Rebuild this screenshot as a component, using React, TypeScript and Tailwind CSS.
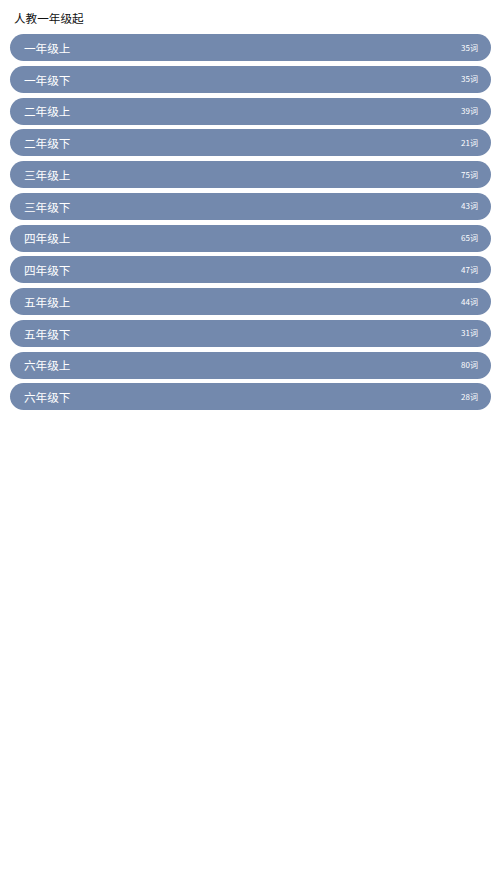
const grades = [
  { name: "一年级上", count: 35 },
  { name: "一年级下", count: 35 },
  { name: "二年级上", count: 39 },
  { name: "二年级下", count: 21 },
  { name: "三年级上", count: 75 },
  { name: "三年级下", count: 43 },
  { name: "四年级上", count: 65 },
  { name: "四年级下", count: 47 },
  { name: "五年级上", count: 44 },
  { name: "五年级下", count: 31 },
  { name: "六年级上", count: 80 },
  { name: "六年级下", count: 28 },
];

export default function App() {
  return (
    <div
      className="min-h-[890px] bg-white px-[10px] pt-[10px]"
      style={{ fontFamily: '"Noto Sans CJK SC", "Noto Sans", sans-serif' }}
    >
      <div className="pl-[4px] text-[11.6px] leading-[17px] text-[#111]">人教一年级起</div>
      <div className="mt-[7px] flex flex-col gap-[4.75px]">
        {grades.map((g) => (
          <div
            key={g.name}
            className="flex h-[27px] items-center justify-between rounded-full bg-[#7389ad] pl-[14px] pr-[13px] text-white"
          >
            <span className="pt-[2px] text-[11.6px]">{g.name}</span>
            <span className="text-[8px]">{g.count}词</span>
          </div>
        ))}
      </div>
    </div>
  );
}
